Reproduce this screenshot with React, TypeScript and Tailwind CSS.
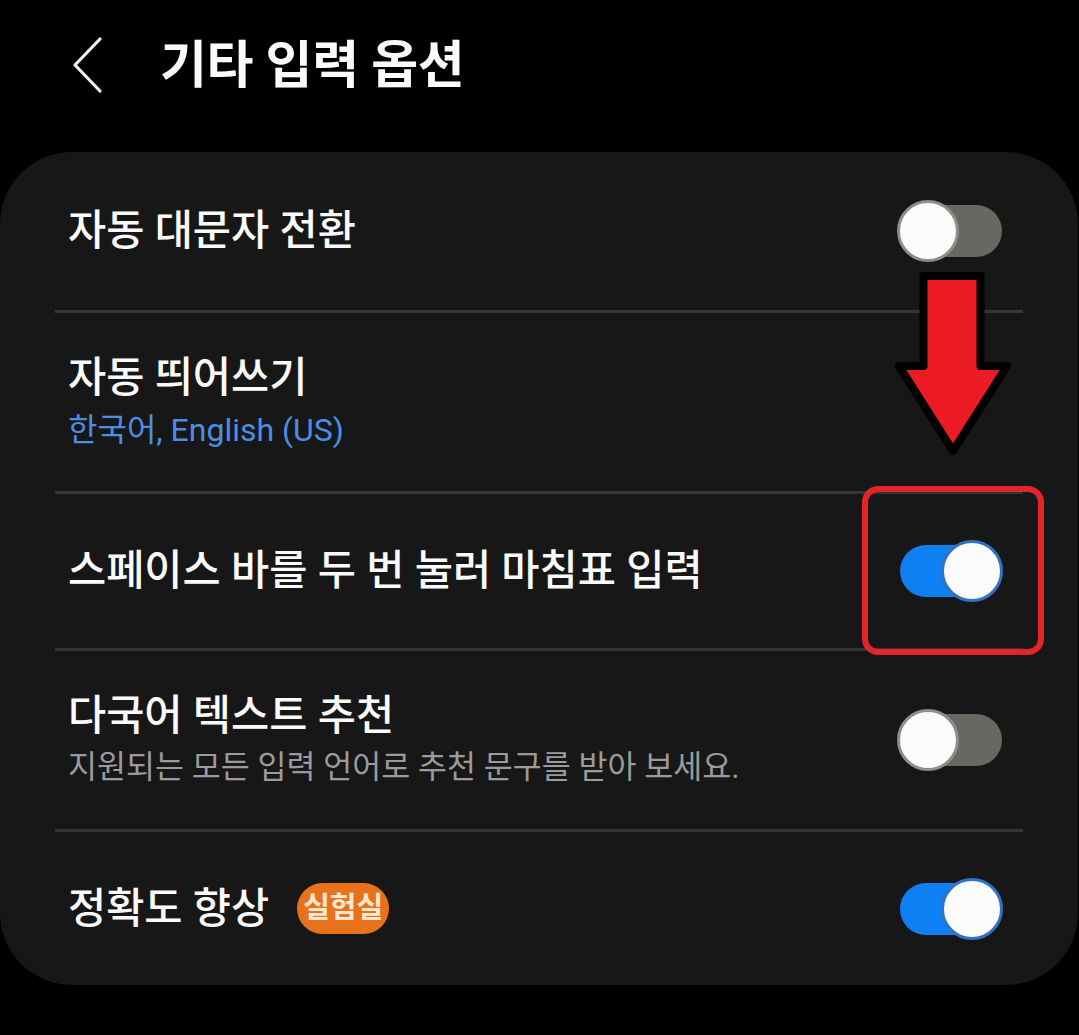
import React from 'react';

const font = { fontFamily: 'Roboto, "Noto Sans CJK KR", sans-serif' };

function Toggle({ on }: { on: boolean }) {
  return (
    <div
      className={`relative w-[102px] h-[52px] rounded-full ${on ? 'bg-[#0f7ff4]' : 'bg-[#686862]'}`}
    >
      {on ? (
        <div className="absolute right-[-1px] top-[-5px] w-[62px] h-[62px] rounded-full bg-[#fbfbfb] border-[3px] border-[#2f74c4]" />
      ) : (
        <div className="absolute left-[-3px] top-[-5px] w-[62px] h-[62px] rounded-full bg-[#fbfbfb] border-[3px] border-[#8d8d8d]" />
      )}
    </div>
  );
}

function Divider() {
  return <div className="h-[3px] mx-[55px] bg-[#363636]" />;
}

export default function App() {
  return (
    <div className="relative w-[1079px] h-[1035px] bg-black text-[#fafafa] overflow-hidden" style={font}>
      {/* Header */}
      <div className="h-[152px] flex items-center pl-[72px] pb-[22px]">
        <svg width="32" height="56" viewBox="0 0 32 56" fill="none">
          <polyline
            points="28,2 3,28 28,54"
            stroke="#f2f2f2"
            strokeWidth="3.2"
            strokeLinecap="round"
            strokeLinejoin="round"
          />
        </svg>
        <h1 className="ml-[56px] text-[51px] font-bold tracking-[-0.3px] leading-none">기타 입력 옵션</h1>
      </div>

      {/* Settings card */}
      <div className="bg-[#171717] rounded-[72px] mr-[1px]">
        <div className="h-[158px] flex items-center justify-between pl-[68px] pr-[76px]">
          <span className="text-[41.5px] font-medium leading-[48px]">자동 대문자 전환</span>
          <Toggle on={false} />
        </div>
        <Divider />

        <div className="h-[178px] flex flex-col justify-center pl-[68px] pr-[76px]">
          <span className="text-[41.5px] font-medium leading-[48px]">자동 띄어쓰기</span>
          <span className="mt-[8px] text-[32px] leading-[40px] text-[#4b8fe3]">한국어, English (US)</span>
        </div>
        <Divider />

        <div className="h-[154px] flex items-center justify-between pl-[68px] pr-[76px]">
          <span className="text-[41.5px] font-medium leading-[48px]">스페이스 바를 두 번 눌러 마침표 입력</span>
          <Toggle on />
        </div>
        <Divider />

        <div className="h-[178px] flex items-center justify-between pl-[68px] pr-[76px]">
          <div className="flex flex-col">
            <span className="text-[41.5px] font-medium leading-[48px]">다국어 텍스트 추천</span>
            <span className="mt-[8px] text-[31.5px] leading-[40px] text-[#9b9b9b]">
              지원되는 모든 입력 언어로 추천 문구를 받아 보세요.
            </span>
          </div>
          <Toggle on={false} />
        </div>
        <Divider />

        <div className="h-[153px] flex items-center justify-between pl-[68px] pr-[76px]">
          <div className="flex items-center">
            <span className="text-[41.5px] font-medium leading-[48px]">정확도 향상</span>
            <span className="ml-[28px] h-[51px] w-[92px] rounded-full bg-[#e8721c] text-[#fde7cf] text-[29px] font-bold flex items-center justify-center">
              실험실
            </span>
          </div>
          <Toggle on />
        </div>
      </div>

      {/* Annotation: arrow */}
      <svg className="absolute left-[885px] top-[265px]" width="136" height="200" viewBox="0 0 136 200">
        <polygon
          points="38.5,11 95.5,11 95.5,101 122,101 68,186 14,101 38.5,101"
          fill="#ed1c24"
          stroke="#000"
          strokeWidth="8"
          strokeLinejoin="round"
        />
      </svg>

      {/* Annotation: highlight box */}
      <div className="absolute left-[862px] top-[486px] w-[182px] h-[169px] border-[6px] border-[#e3242b] rounded-[16px]" />
    </div>
  );
}
